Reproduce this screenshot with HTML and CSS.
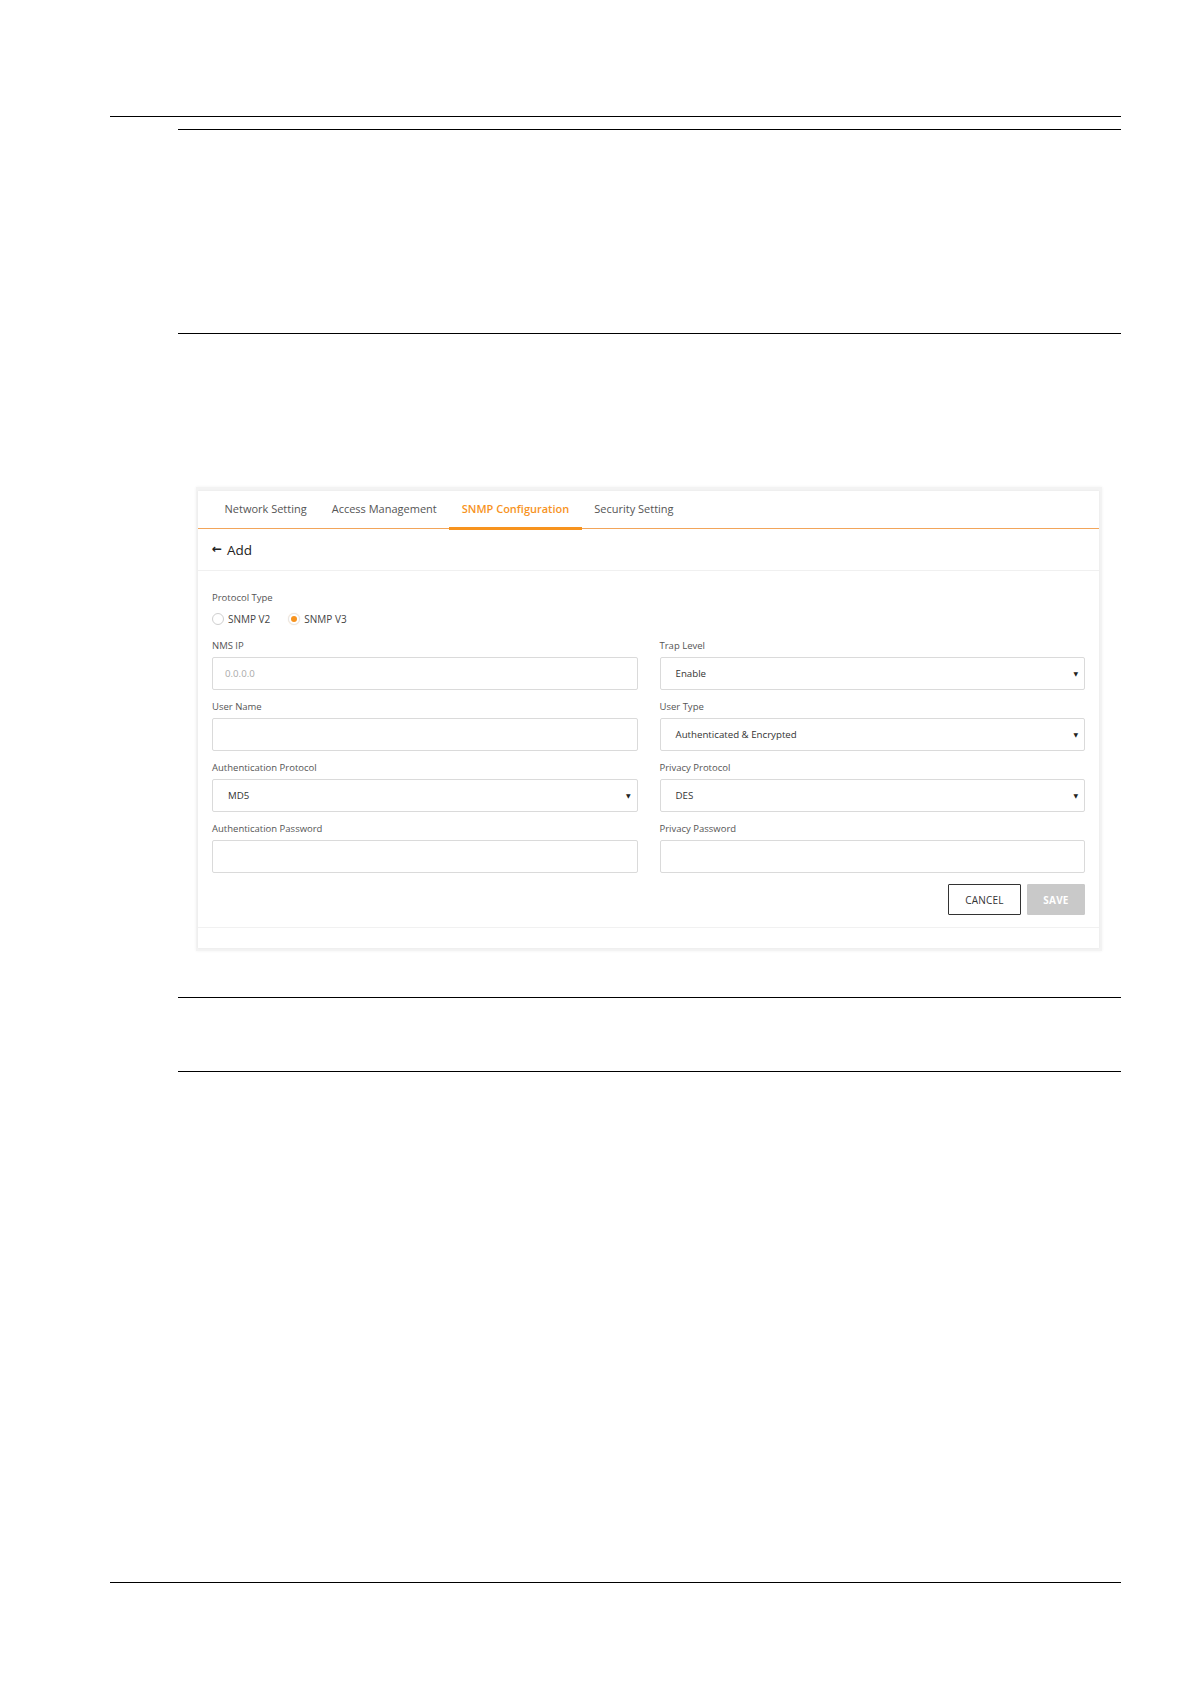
FILE: index.html
```html
<!DOCTYPE html>
<html lang="en">
<head>
<meta charset="utf-8">
<title>SNMP Configuration</title>
<link rel="stylesheet" href="styles.css">
</head>
<body>
<div class="page">
  <div class="rule rule-header"></div>
  <div class="content">
    <div class="rule rule-b"></div>
    <div class="rule rule-c"></div>

    <div class="figure">
      <div class="card">
        <nav class="tabs">
          <span class="tab">Network Setting</span>
          <span class="tab">Access Management</span>
          <span class="tab active">SNMP Configuration</span>
          <span class="tab">Security Setting</span>
        </nav>
        <div class="card-head">
          <span class="back">&#8592;</span><span class="head-title">Add</span>
        </div>
        <div class="card-body">
          <div class="label">Protocol Type</div>
          <div class="radios">
            <label class="radio"><span class="dot"></span>SNMP V2</label>
            <label class="radio checked"><span class="dot"></span>SNMP V3</label>
          </div>
          <div class="grid">
            <div class="field">
              <div class="label">NMS IP</div>
              <div class="input placeholder">0.0.0.0</div>
            </div>
            <div class="field">
              <div class="label">Trap Level</div>
              <div class="input select">Enable<span class="caret">&#9660;</span></div>
            </div>
            <div class="field">
              <div class="label">User Name</div>
              <div class="input"></div>
            </div>
            <div class="field">
              <div class="label">User Type</div>
              <div class="input select">Authenticated &amp; Encrypted<span class="caret">&#9660;</span></div>
            </div>
            <div class="field">
              <div class="label">Authentication Protocol</div>
              <div class="input select">MD5<span class="caret">&#9660;</span></div>
            </div>
            <div class="field">
              <div class="label">Privacy Protocol</div>
              <div class="input select">DES<span class="caret">&#9660;</span></div>
            </div>
            <div class="field">
              <div class="label">Authentication Password</div>
              <div class="input"></div>
            </div>
            <div class="field">
              <div class="label">Privacy Password</div>
              <div class="input"></div>
            </div>
          </div>
          <div class="actions">
            <button class="btn btn-cancel">CANCEL</button>
            <button class="btn btn-save">SAVE</button>
          </div>
        </div>
        <div class="card-foot"></div>
      </div>
    </div>

    <div class="rule rule-d"></div>
    <div class="rule rule-e"></div>
  </div>
  <div class="rule rule-footer"></div>
</div>
</body>
</html>
```

FILE: styles.css
```css
html, body {
  margin: 0;
  padding: 0;
  background: #ffffff;
}

body {
  font-family: "Open Sans", "Noto Sans", "DejaVu Sans", sans-serif;
  color: #333;
}

.page {
  width: 1011px;
  margin-left: 110px;
  padding-top: 116px;
  padding-bottom: 101px;
}

.rule {
  height: 0;
  border-top: 1.3px solid #000;
}

.content {
  margin-left: 68px;
}

.rule-b { margin-top: 12px; }
.rule-c { margin-top: 203px; }

.figure {
  margin: 153px 19px 0 18px;
  padding: 4px 3px 3px 2px;
  background: #f3f3f3;
  box-shadow: 0 0 3px rgba(0, 0, 0, 0.06);
}

.card {
  background: #fff;
  box-shadow: 0 0 2px rgba(0, 0, 0, 0.06);
}

.tabs {
  display: flex;
  height: 37px;
  padding-left: 14px;
  border-bottom: 1.5px solid #f2a55a;
  align-items: stretch;
}

.tab {
  display: flex;
  align-items: center;
  padding: 0 12.5px 2px;
  font-size: 11px;
  color: #555;
  white-space: nowrap;
  position: relative;
}

.tab.active {
  color: #f7931e;
  font-weight: 600;
}

.tab.active::after {
  content: "";
  position: absolute;
  left: 0;
  right: 0;
  bottom: -1.5px;
  height: 3px;
  background: #f7931e;
}

.card-head {
  display: flex;
  align-items: center;
  height: 41px;
  padding-left: 14px;
  border-bottom: 1px solid #f0f0f0;
  font-size: 13.5px;
  color: #222;
}

.back {
  font-size: 12px;
  font-weight: 700;
  margin-right: 5px;
  position: relative;
  top: -1px;
}

.card-body {
  padding: 20px 14px 12px;
}

.label {
  font-size: 9.5px;
  line-height: 14px;
  color: #555;
}

.radios {
  display: flex;
  gap: 18px;
  margin-top: 7px;
  height: 14px;
  align-items: center;
}

.radio {
  display: flex;
  align-items: center;
  font-size: 10px;
  color: #444;
}

.dot {
  width: 12px;
  height: 12px;
  border: 1px solid #cfcfcf;
  border-radius: 50%;
  margin-right: 4px;
  box-sizing: border-box;
  position: relative;
  background: #fff;
}

.radio.checked .dot {
  border-color: #e6e6e6;
  background: #fff;
  box-shadow: 0 0 1px rgba(247, 147, 30, 0.3);
}

.radio.checked .dot::after {
  content: "";
  position: absolute;
  left: 2px;
  top: 2px;
  width: 6px;
  height: 6px;
  border-radius: 50%;
  background: #f7931e;
}

.grid {
  display: grid;
  grid-template-columns: 1fr 1fr;
  column-gap: 22px;
  row-gap: 10px;
  margin-top: 13px;
}

.field .label {
  margin-bottom: 4px;
}

.input {
  height: 33px;
  box-sizing: border-box;
  border: 1px solid #dadada;
  border-radius: 2px;
  display: flex;
  align-items: center;
  padding: 0 12px;
  font-size: 9.7px;
  color: #333;
  position: relative;
}

.input.placeholder {
  color: #aaa;
}

.input.select {
  padding-left: 15px;
}

.caret {
  position: absolute;
  right: 6px;
  top: 50%;
  transform: translateY(-50%);
  font-size: 6px;
  color: #222;
}

.actions {
  display: flex;
  justify-content: flex-end;
  gap: 6px;
  margin-top: 11px;
}

.btn {
  height: 31px;
  box-sizing: border-box;
  font-family: "Open Sans", "Noto Sans", sans-serif;
  font-size: 10px;
  letter-spacing: 0.2px;
  padding: 0;
  border-radius: 1px;
}

.btn-cancel {
  width: 73px;
  background: #fff;
  border: 1.5px solid #333;
  color: #333;
}

.btn-save {
  width: 58px;
  background: #c9c9c9;
  border: 1px solid #c9c9c9;
  color: #fff;
  font-weight: 700;
}

.card-foot {
  height: 20px;
  border-top: 1px solid #f1f1f1;
}

.rule-d { margin-top: 46px; }
.rule-e { margin-top: 73px; }

.rule-footer { margin-top: 510px; }
```
